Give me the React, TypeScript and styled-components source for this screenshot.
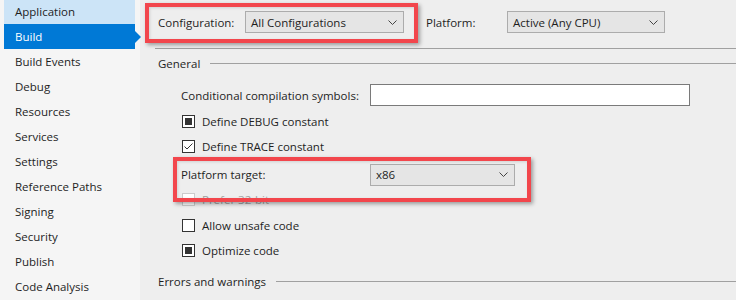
import * as React from "react";
import styled, { createGlobalStyle, css } from "styled-components";

const GlobalStyle = createGlobalStyle`
  html, body {
    margin: 0;
    padding: 0;
    background: #eeeeee;
    overflow: hidden;
  }
  body {
    font-family: "Open Sans", "Noto Sans", sans-serif;
    font-size: 11.5px;
    color: #1e1e1e;
  }
`;

const pages = [
  "Application",
  "Build",
  "Build Events",
  "Debug",
  "Resources",
  "Services",
  "Settings",
  "Reference Paths",
  "Signing",
  "Security",
  "Publish",
  "Code Analysis"
];

type CheckState = "empty" | "filled" | "checked";

export default function App() {
  return (
    <>
      <GlobalStyle />
      <Page>
        <Sidebar>
          {pages.map(p => (
            <NavItem
              key={p}
              $active={p === "Build"}
              $hover={p === "Application"}
            >
              {p}
            </NavItem>
          ))}
        </Sidebar>
        <Main>
          <Toolbar>
            <Highlight $inset="-8px -14px -10px -13px">
              <ToolLabel $width={87}>Configuration:</ToolLabel>
              <Dropdown value="All Configurations" width={159} />
            </Highlight>
            <ToolLabel $width={59}>Platform:</ToolLabel>
            <Dropdown value="Active (Any CPU)" width={158} />
          </Toolbar>
          <TopRule />
          <GroupHeader>General</GroupHeader>
          <Form>
            <Row $height={28}>
              <FieldLabel>Conditional compilation symbols:</FieldLabel>
              <TextBox />
            </Row>
            <CheckRow state="filled" label="Define DEBUG constant" />
            <CheckRow state="checked" label="Define TRACE constant" />
            <PlatformRow>
              <Highlight $inset="-7px -16px -16px -8px">
                <FieldLabel>Platform target:</FieldLabel>
                <Dropdown value="x86" width={145} />
              </Highlight>
            </PlatformRow>
            <CheckRow state="empty" label="Prefer 32-bit" disabled />
            <CheckRow state="empty" label="Allow unsafe code" height={26} />
            <CheckRow state="filled" label="Optimize code" />
          </Form>
          <GroupHeader $top={11}>Errors and warnings</GroupHeader>
        </Main>
      </Page>
    </>
  );
}

const Dropdown = ({ value, width }: { value: string; width: number }) => (
  <Select style={{ width }}>
    <span>{value}</span>
    <svg width="9" height="5" viewBox="0 0 9 5">
      <path d="M0.5 0.5 L4.5 4.5 L8.5 0.5" fill="none" stroke="#444" strokeWidth="1" />
    </svg>
  </Select>
);

const CheckRow = ({
  state,
  label,
  disabled = false,
  height = 25
}: {
  state: CheckState;
  label: string;
  disabled?: boolean;
  height?: number;
}) => (
  <Row $height={height}>
    <Box $disabled={disabled}>
      {state === "filled" && <Fill />}
      {state === "checked" && (
        <svg width="11" height="11" viewBox="0 0 11 11">
          <path d="M1.5 5.5 L4 8 L9.5 2.5" fill="none" stroke="#333" strokeWidth="1" />
        </svg>
      )}
    </Box>
    <CheckText $disabled={disabled}>{label}</CheckText>
  </Row>
);

const Page = styled.div`
  display: flex;
  width: 736px;
  height: 300px;
  overflow: hidden;
`;

const Sidebar = styled.div`
  width: 136px;
  padding-left: 4px;
  background: #f5f5f5;
  display: flex;
  flex-direction: column;
  flex-shrink: 0;
`;

const NavItem = styled.div<{ $active?: boolean; $hover?: boolean }>`
  position: relative;
  width: 131px;
  height: 25px;
  line-height: 26px;
  padding-left: 11px;
  box-sizing: border-box;
  color: #1e1e1e;
  ${p =>
    p.$hover &&
    css`
      background: #cce4f7;
      height: 24px;
      line-height: 24px;
    `}
  ${p =>
    p.$active &&
    css`
      background: #0079d6;
      color: #ffffff;
      &::after {
        content: "";
        position: absolute;
        right: -6px;
        top: 7px;
        border-left: 6px solid #0079d6;
        border-top: 6px solid transparent;
        border-bottom: 6px solid transparent;
      }
    `}
`;

const Main = styled.div`
  flex: 1;
  background: #eeeeee;
  padding-top: 11px;
  display: flex;
  flex-direction: column;
`;

const Toolbar = styled.div`
  display: flex;
  align-items: center;
  padding-left: 18px;
  height: 22px;
  gap: 22px;
`;

const Highlight = styled.div<{ $inset: string }>`
  position: relative;
  display: flex;
  align-items: center;

  &::after {
    content: "";
    position: absolute;
    inset: ${p => p.$inset};
    border: 4px solid #f2464c;
    box-shadow: 2px 2px 4px rgba(0, 0, 0, 0.35),
      inset 1px 1px 3px rgba(0, 0, 0, 0.12);
    pointer-events: none;
    z-index: 2;
  }
`;

const ToolLabel = styled.span<{ $width: number }>`
  width: ${p => p.$width}px;
  color: #1e1e1e;
`;

const Select = styled.div`
  height: 22px;
  box-sizing: border-box;
  background: #e5e5e5;
  border: 1px solid #acacac;
  display: flex;
  align-items: center;
  justify-content: space-between;
  padding: 0 6px 0 5px;
  color: #1e1e1e;

  svg {
    display: block;
  }
`;

const TopRule = styled.div`
  height: 1px;
  background: #a0a0a0;
  margin: 15px 0 0 15px;
`;

const GroupHeader = styled.div<{ $top?: number }>`
  display: flex;
  align-items: center;
  height: 14px;
  margin-top: ${p => p.$top ?? 7}px;
  padding-left: 18px;
  white-space: nowrap;

  &::after {
    content: "";
    flex: 1;
    height: 1px;
    background: #a0a0a0;
    margin-left: 10px;
  }
`;

const Form = styled.div`
  display: flex;
  flex-direction: column;
  margin-top: 11px;
  padding-left: 41px;
`;

const Row = styled.div<{ $height: number }>`
  display: flex;
  align-items: center;
  height: ${p => p.$height}px;
`;

const PlatformRow = styled(Row).attrs({ $height: 25 })`
  margin-top: 3px;
`;

const FieldLabel = styled.span`
  width: 189px;
  flex-shrink: 0;
`;

const TextBox = styled.div`
  width: 320px;
  height: 22px;
  box-sizing: border-box;
  background: #ffffff;
  border: 1px solid #7a7a7a;
`;

const Box = styled.div<{ $disabled?: boolean }>`
  width: 13px;
  height: 13px;
  box-sizing: border-box;
  margin-left: 1px;
  border: 1px solid ${p => (p.$disabled ? "#cccccc" : "#333333")};
  background: #ffffff;
  display: flex;
  align-items: center;
  justify-content: center;
`;

const Fill = styled.div`
  width: 7px;
  height: 7px;
  background: #333333;
`;

const CheckText = styled.span<{ $disabled?: boolean }>`
  margin-left: 7px;
  color: ${p => (p.$disabled ? "#a2a2a2" : "#1e1e1e")};
`;
